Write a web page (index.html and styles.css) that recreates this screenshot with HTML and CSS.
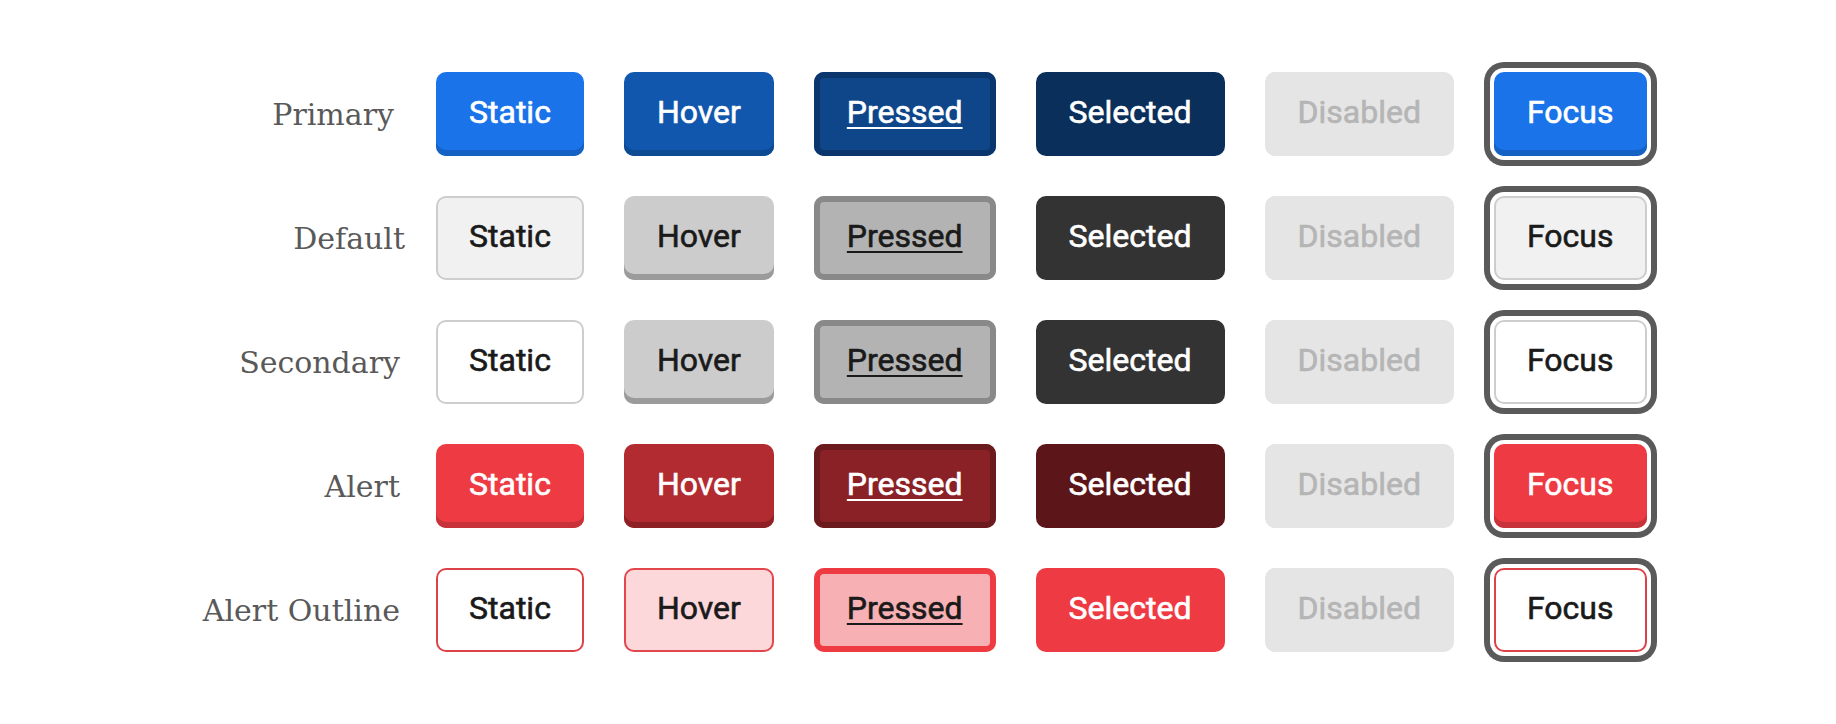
FILE: index.html
```html
<!DOCTYPE html>
<html lang="en">
<head>
<meta charset="utf-8">
<title>Button states</title>
<link rel="stylesheet" href="styles.css">
</head>
<body>
<main class="matrix">
  <div class="row">
    <div class="label label-primary">Primary</div>
    <div class="buttons">
      <span class="btn primary static">Static</span>
      <span class="btn primary hover">Hover</span>
      <span class="btn primary pressed">Pressed</span>
      <span class="btn primary selected">Selected</span>
      <span class="btn disabled">Disabled</span>
      <span class="btn primary static focus">Focus</span>
    </div>
  </div>
  <div class="row">
    <div class="label label-default">Default</div>
    <div class="buttons">
      <span class="btn default static">Static</span>
      <span class="btn neutral hover">Hover</span>
      <span class="btn neutral pressed">Pressed</span>
      <span class="btn neutral selected">Selected</span>
      <span class="btn disabled">Disabled</span>
      <span class="btn default static focus">Focus</span>
    </div>
  </div>
  <div class="row">
    <div class="label">Secondary</div>
    <div class="buttons">
      <span class="btn secondary static">Static</span>
      <span class="btn neutral hover">Hover</span>
      <span class="btn neutral pressed">Pressed</span>
      <span class="btn neutral selected">Selected</span>
      <span class="btn disabled">Disabled</span>
      <span class="btn secondary static focus">Focus</span>
    </div>
  </div>
  <div class="row">
    <div class="label">Alert</div>
    <div class="buttons">
      <span class="btn alert static">Static</span>
      <span class="btn alert hover">Hover</span>
      <span class="btn alert pressed">Pressed</span>
      <span class="btn alert selected">Selected</span>
      <span class="btn disabled">Disabled</span>
      <span class="btn alert static focus">Focus</span>
    </div>
  </div>
  <div class="row">
    <div class="label">Alert Outline</div>
    <div class="buttons">
      <span class="btn outline static">Static</span>
      <span class="btn outline hover">Hover</span>
      <span class="btn outline pressed">Pressed</span>
      <span class="btn outline selected">Selected</span>
      <span class="btn disabled">Disabled</span>
      <span class="btn outline static focus">Focus</span>
    </div>
  </div>
</main>
</body>
</html>
```
FILE: styles.css
```css
html, body {
  margin: 0;
  padding: 0;
  background: #ffffff;
}

.matrix {
  display: flex;
  flex-direction: column;
  gap: 40px;
  padding: 72px 0 72px;
  min-height: 724px;
  box-sizing: border-box;
}

.row {
  display: flex;
  align-items: flex-start;
  gap: 36px;
}

.label {
  width: 400px;
  box-sizing: border-box;
  flex: none;
  text-align: right;
  font-family: "DejaVu Serif", "Liberation Serif", serif;
  font-size: 30px;
  line-height: 30px;
  padding-top: 28px;
  color: #595959;
}

.label-primary {
  padding-right: 6px;
}

.label-default {
  width: 405px;
  margin-right: -5px;
}

.buttons {
  display: flex;
  gap: 40px;
}

.btn {
  display: block;
  box-sizing: border-box;
  height: 84px;
  padding: 24px 33px 28px;
  border-radius: 10px;
  font-family: Roboto, "Liberation Sans", sans-serif;
  font-weight: 400;
  font-size: 32px;
  line-height: 32px;
  white-space: nowrap;
  color: #ffffff;
  -webkit-text-stroke: 0.6px currentColor;
}

.pressed {
  text-decoration: underline;
  text-decoration-thickness: 2px;
  text-underline-offset: 4px;
}

/* Primary */
.primary.static { background: #1a73e8; box-shadow: inset 0 -6px 0 #1561c4; }
.primary.hover { background: #1157ad; box-shadow: inset 0 -6px 0 #0e4a94; }
.primary.pressed { background: #0e4689; box-shadow: inset 0 0 0 6px #0a356d; }
.primary.selected { background: #0a2f5a; }

/* Default / Secondary */
.default.static { background: #f1f1f1; color: #1a1a1a; box-shadow: inset 0 0 0 2px #cdcdcd; }
.secondary.static { background: #ffffff; color: #1a1a1a; box-shadow: inset 0 0 0 2px #cdcdcd; }
.neutral.hover { background: #cccccc; color: #1a1a1a; box-shadow: inset 0 -6px 0 #9b9b9b; }
.neutral.pressed { background: #b3b3b3; color: #1a1a1a; box-shadow: inset 0 0 0 6px #898989; }
.neutral.selected { background: #333333; }

/* Alert */
.alert.static { background: #ee3b43; box-shadow: inset 0 -6px 0 #c8323a; }
.alert.hover { background: #b22b30; box-shadow: inset 0 -6px 0 #8c2025; }
.alert.pressed { background: #8a2126; box-shadow: inset 0 0 0 6px #6b1a1d; }
.alert.selected { background: #5c161a; }

/* Alert Outline */
.outline.static { background: #ffffff; color: #1a1a1a; box-shadow: inset 0 0 0 2px #dc4349; }
.outline.hover { background: #fcd8da; color: #1a1a1a; box-shadow: inset 0 0 0 2px #e2474d; }
.outline.pressed { background: #f7b0b3; color: #1a1a1a; box-shadow: inset 0 0 0 6px #ee3b42; }
.outline.selected { background: #ee3b43; }

/* Disabled */
.disabled { background: #e5e5e5; color: #b5b5b5; }

/* Focus ring */
.primary.focus { box-shadow: inset 0 -6px 0 #1561c4, 0 0 0 4px #ffffff, 0 0 0 10px #5a5a5a; }
.default.focus,
.secondary.focus { box-shadow: inset 0 0 0 2px #cdcdcd, 0 0 0 4px #ffffff, 0 0 0 10px #5a5a5a; }
.alert.focus { box-shadow: inset 0 -6px 0 #c8323a, 0 0 0 4px #ffffff, 0 0 0 10px #5a5a5a; }
.outline.focus { box-shadow: inset 0 0 0 2px #dc4349, 0 0 0 4px #ffffff, 0 0 0 10px #5a5a5a; }
```
